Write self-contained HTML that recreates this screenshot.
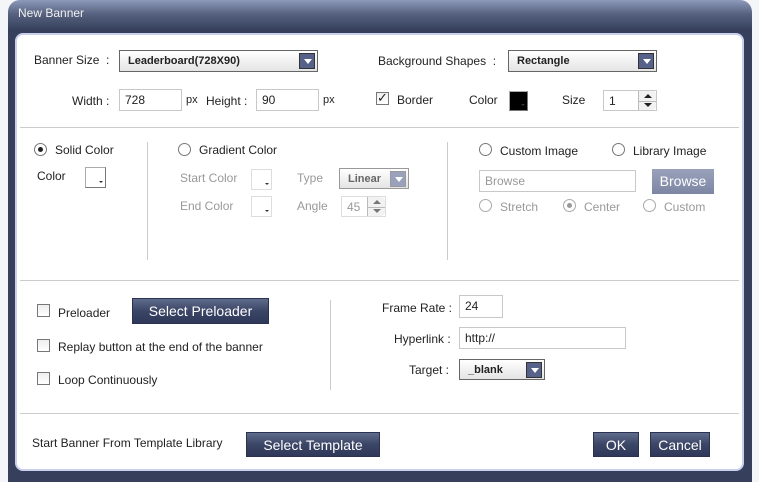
<!DOCTYPE html>
<html><head><style>
*{margin:0;padding:0;box-sizing:border-box}
body{width:759px;height:482px;overflow:hidden;background:#f4f5f8;font-family:"Liberation Sans",Arial,sans-serif;font-size:12px;color:#222;position:relative}
.a{position:absolute}
.frame{left:8px;top:0;width:744px;height:482px;background:linear-gradient(#8d9abb 0,#56627f 14px,#36405c 30px,#36405c);border-radius:12px 12px 0 0}
.panel{left:15px;top:33px;width:729px;height:438px;background:#fff;border:2px solid #c9d0ee;border-radius:8px}
.t{position:absolute;white-space:nowrap;line-height:14px}
.g{color:#999}
.inp{position:absolute;border:1px solid #c8c8c8;background:#fff;padding:3px 5px;line-height:14px}
.sel{position:absolute;border:1px solid #666;background:linear-gradient(#fff,#e4e4e4);font-weight:bold;font-size:11px;padding:4px 8px;line-height:13px}
.sel i{position:absolute;right:2px;top:2px;width:16px;height:16px;background:#56628a;border:1px solid #333}
.sel i:after{content:"";position:absolute;left:4px;top:5px;border:4px solid transparent;border-top:5px solid #fff}
.hr{position:absolute;height:1px;background:#ccc}
.vr{position:absolute;width:1px;background:#ccc}
.rad{position:absolute;width:13px;height:13px;border:1px solid #777;border-radius:50%;background:#fff}
.rad.on:after{content:"";position:absolute;left:3px;top:3px;width:5px;height:5px;border-radius:50%;background:#222}
.rad.gr{border-color:#aaa}.rad.gr.on:after{background:#999}
.chk{position:absolute;width:13px;height:13px;border:1px solid #777;background:linear-gradient(#eee,#fff)}
.sw{position:absolute;border:1px solid #aaa;border-right-color:#777;border-bottom-color:#777;background:#fff}
.sw:after{content:"";position:absolute;right:2px;bottom:2px;border:2px solid transparent;border-top:2px solid #333}
.btn{position:absolute;background:linear-gradient(#5f6c8c,#3b4566 50%,#2f3858);color:#fff;font-size:14px;text-align:center;line-height:25px;border:1px solid #2a3250}
.spin{position:absolute;border:1px solid #c8c8c8;background:#fff;padding:3px 5px}
.spin b{position:absolute;right:0;top:0;width:18px;height:100%;border-left:1px solid #bbb;border-radius:0 4px 4px 0;background:#f2f2f2}
.spin b:before{content:"";position:absolute;left:5px;top:3px;border:4px solid transparent;border-bottom:4px solid #222;border-top:0}
.spin b:after{content:"";position:absolute;left:5px;bottom:3px;border:4px solid transparent;border-top:4px solid #222;border-bottom:0}
.spin b i{position:absolute;left:0;right:0;top:50%;height:1px;background:#bbb}
.spin.g b:before{border-bottom-color:#777}.spin.g b:after{border-top-color:#777}
</style></head><body>
<div class="a frame"></div>
<div class="t" style="left:18px;top:6px;color:#f0f0f0;font-size:12px">New Banner</div>
<div class="a panel"></div>

<div class="t" style="left:34px;top:53px">Banner Size &nbsp;:</div>
<div class="sel" style="left:119px;top:50px;width:199px;height:22px">Leaderboard(728X90)<i></i></div>
<div class="t" style="left:378px;top:54px">Background Shapes &nbsp;:</div>
<div class="sel" style="left:508px;top:50px;width:149px;height:22px">Rectangle<i></i></div>

<div class="t" style="left:72px;top:94px">Width :</div>
<div class="inp" style="left:119px;top:89px;width:63px;height:22px">728</div>
<div class="t" style="left:186px;top:93px;font-size:11px">px</div>
<div class="t" style="left:206px;top:94px">Height :</div>
<div class="inp" style="left:256px;top:89px;width:63px;height:22px">90</div>
<div class="t" style="left:323px;top:93px;font-size:11px">px</div>
<div class="chk" style="left:376px;top:92px"><span style="position:absolute;left:0;top:-3px;font-size:13px">✓</span></div>
<div class="t" style="left:397px;top:93px">Border</div>
<div class="t" style="left:469px;top:93px">Color</div>
<div class="sw" style="left:509px;top:91px;width:19px;height:20px;background:#000"></div>
<div class="t" style="left:562px;top:93px">Size</div>
<div class="spin" style="left:603px;top:90px;width:54px;height:21px">1<b><i></i></b></div>

<div class="hr" style="left:20px;top:127px;width:719px"></div>

<div class="rad on" style="left:34px;top:143px"></div>
<div class="t" style="left:55px;top:143px">Solid Color</div>
<div class="t" style="left:37px;top:169px">Color</div>
<div class="sw" style="left:85px;top:167px;width:21px;height:21px"></div>
<div class="vr" style="left:147px;top:142px;height:118px"></div>
<div class="rad" style="left:178px;top:143px"></div>
<div class="t" style="left:199px;top:143px">Gradient Color</div>
<div class="t g" style="left:180px;top:171px">Start Color</div>
<div class="sw" style="left:251px;top:169px;width:21px;height:21px;border-color:#ddd"></div>
<div class="t g" style="left:297px;top:171px">Type</div>
<div class="sel" style="left:339px;top:168px;width:70px;height:21px;color:#666;border-color:#999">Linear<i style="background:#9aa1bd;border-color:#999"></i></div>
<div class="t g" style="left:180px;top:199px">End Color</div>
<div class="sw" style="left:251px;top:196px;width:21px;height:21px;border-color:#ddd"></div>
<div class="t g" style="left:297px;top:199px">Angle</div>
<div class="spin g" style="left:341px;top:196px;width:45px;height:21px;border-color:#ddd">45<b><i></i></b></div>
<div class="vr" style="left:447px;top:142px;height:118px"></div>
<div class="rad" style="left:479px;top:143px"></div>
<div class="t" style="left:500px;top:144px">Custom Image</div>
<div class="rad" style="left:612px;top:143px"></div>
<div class="t" style="left:633px;top:144px">Library Image</div>
<div class="inp g" style="left:479px;top:170px;width:157px;height:22px">Browse</div>
<div class="a" style="left:652px;top:169px;width:62px;height:25px;background:linear-gradient(#9aa2bb,#7c86a3);color:#fff;font-size:14px;text-align:center;line-height:25px">Browse</div>
<div class="rad gr" style="left:479px;top:199px"></div>
<div class="t g" style="left:500px;top:200px">Stretch</div>
<div class="rad gr on" style="left:563px;top:199px"></div>
<div class="t g" style="left:584px;top:200px">Center</div>
<div class="rad gr" style="left:643px;top:199px"></div>
<div class="t g" style="left:664px;top:200px">Custom</div>

<div class="hr" style="left:20px;top:280px;width:719px"></div>

<div class="chk" style="left:37px;top:304px"></div>
<div class="t" style="left:58px;top:306px">Preloader</div>
<div class="btn" style="left:132px;top:298px;width:137px;height:26px">Select Preloader</div>
<div class="chk" style="left:37px;top:339px"></div>
<div class="t" style="left:58px;top:340px">Replay button at the end of the banner</div>
<div class="chk" style="left:37px;top:372px"></div>
<div class="t" style="left:58px;top:373px">Loop Continuously</div>
<div class="vr" style="left:330px;top:300px;height:90px"></div>
<div class="t" style="left:382px;top:301px">Frame Rate :</div>
<div class="inp" style="left:459px;top:295px;width:44px;height:23px">24</div>
<div class="t" style="left:394px;top:332px">Hyperlink :</div>
<div class="inp" style="left:459px;top:327px;width:167px;height:22px">http://</div>
<div class="t" style="left:409px;top:363px">Target :</div>
<div class="sel" style="left:459px;top:359px;width:86px;height:21px">_blank<i></i></div>

<div class="hr" style="left:20px;top:413px;width:719px"></div>

<div class="t" style="left:32px;top:436px">Start Banner From Template Library</div>
<div class="btn" style="left:246px;top:432px;width:134px;height:25px">Select Template</div>
<div class="btn" style="left:593px;top:432px;width:46px;height:25px">OK</div>
<div class="btn" style="left:650px;top:432px;width:60px;height:25px">Cancel</div>
</body></html>
